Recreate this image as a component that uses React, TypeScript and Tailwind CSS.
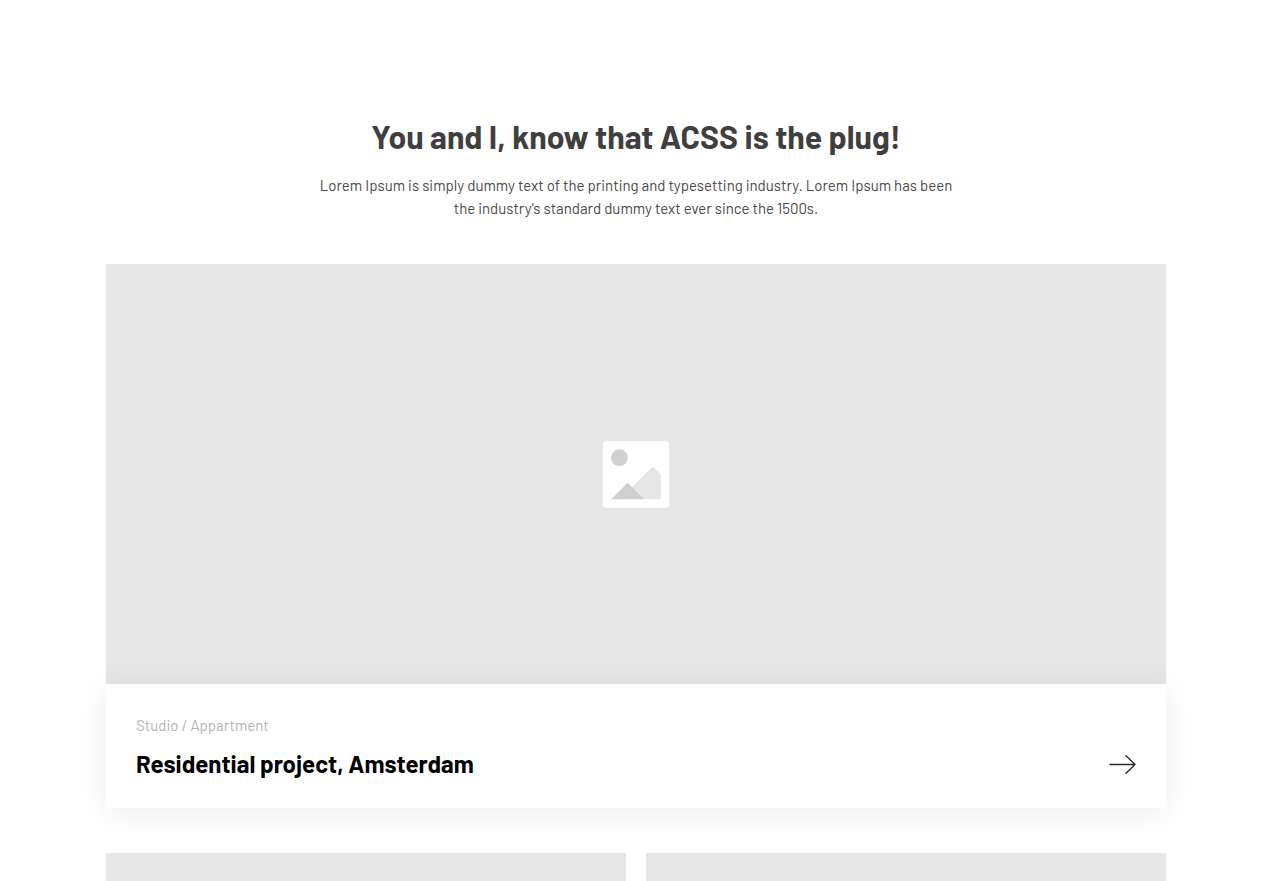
export default function App() {
  return (
    <main className="h-screen overflow-hidden bg-white px-5 pt-[115px] font-['Barlow','Roboto',sans-serif]">
      <header className="mx-auto max-w-[640px] text-center">
        <h2 className="text-[32px] leading-[42px] font-bold text-[#3f3f3f]">You and I, know that ACSS is the plug!</h2>
        <p className="mt-[17px] text-[15px] leading-[23px] text-[#4a4a4a]">
          Lorem Ipsum is simply dummy text of the printing and typesetting industry. Lorem Ipsum has been
          the industry's standard dummy text ever since the 1500s.
        </p>
      </header>
      <section className="mx-auto mt-11 max-w-[1060px]">
        <article>
          <div className="flex h-[420px] items-center justify-center bg-[#e6e6e6]">
            <svg width="68" height="68" viewBox="0 0 68 68" role="img" aria-label="Placeholder image">
              <rect x="0.8" y="1.3" width="66.4" height="66.4" rx="3" fill="#fff" />
              <circle cx="17.4" cy="17.7" r="8.4" fill="#cfcfcf" />
              <path d="M18.200 59.200L50.700 26.500L58.700 34.200V59.200Z" fill="#e6e6e6" />
              <path d="M9.200 59.200L25.600 42.800L42 59.200Z" fill="#cfcfcf" />
            </svg>
          </div>
          <div className="relative flex items-end justify-between bg-white p-[30px] shadow-[0_5px_30px_rgba(0,0,0,0.08)]">
            <div>
              <p className="text-[15px] leading-[23px] text-[#b3b3b3]">Studio / Appartment</p>
              <h3 className="mt-3 text-[24px] leading-[29px] font-bold text-black">Residential project, Amsterdam</h3>
            </div>
            <a href="#project" aria-label="View project">
              <svg className="block" width="27" height="29" viewBox="0 0 27 29" fill="none" stroke="#2a2a2a" strokeWidth="1.4" strokeLinecap="round" strokeLinejoin="round">
                <path d="M1 15.500H26M17 6.800L26 15.500L17 24.200" />
              </svg>
            </a>
          </div>
        </article>
        <div className="mt-[45px] grid grid-cols-2 gap-5">
          <div className="h-[420px] bg-[#e6e6e6]" />
          <div className="h-[420px] bg-[#e6e6e6]" />
        </div>
      </section>
    </main>
  );
}
